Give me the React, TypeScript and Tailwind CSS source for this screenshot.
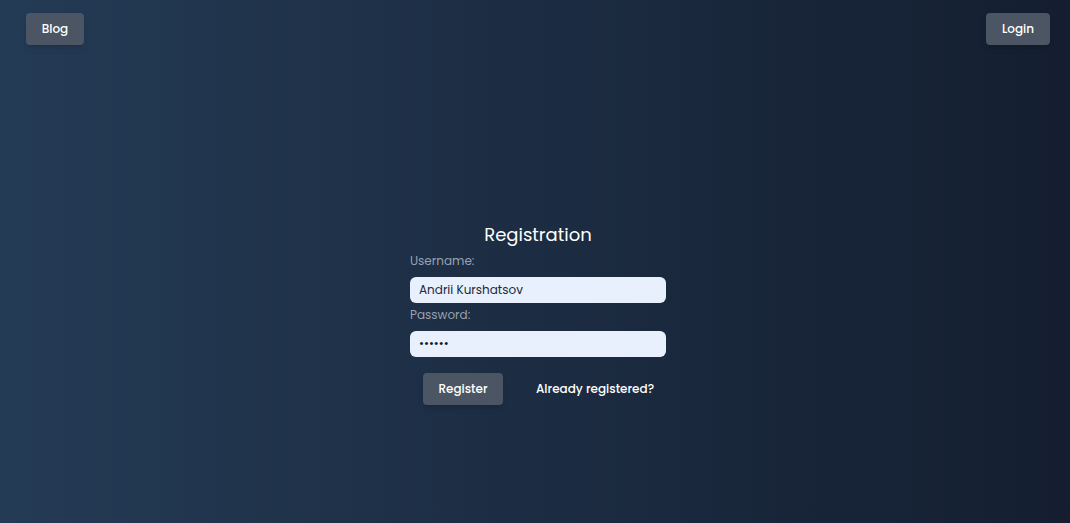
export default function App() {
  return (
    <div className="min-h-screen w-full bg-gradient-to-r from-[#243b55] to-[#141e30] font-['Poppins','Noto_Sans',sans-serif] text-white">
      <header className="flex items-center justify-between pl-[26px] pr-[20px] pt-[13px]">
        <button className="h-8 w-[58px] bg-[#4b5563] rounded-sm shadow-md text-xs font-medium">Blog</button>
        <button className="h-8 w-16 bg-[#4b5563] rounded-sm shadow-md text-xs font-medium">Login</button>
      </header>
      <div className="pl-[6px]">
        <main className="mx-auto mt-[176px] w-64 flex flex-col">
          <h1 className="text-lg font-normal text-center leading-7 mb-[2px]">Registration</h1>
          <label className="text-xs leading-5 text-gray-400">Username:</label>
          <input
            className="mt-1.5 h-[26px] rounded-md bg-[#e8f0fe] px-[9px] text-xs text-gray-800 outline-none"
            defaultValue="Andrii Kurshatsov"
          />
          <label className="mt-0.5 text-xs leading-5 text-gray-400">Password:</label>
          <input
            type="password"
            className="mt-1.5 h-[26px] rounded-md bg-[#e8f0fe] px-[9px] text-xs text-gray-900 outline-none"
            defaultValue="123456"
          />
          <div className="mt-4 flex items-center pl-[13px] gap-[33px]">
            <button className="h-8 w-20 bg-[#4b5563] rounded-sm shadow-md text-xs font-medium">Register</button>
            <a className="text-xs font-medium">Already registered?</a>
          </div>
        </main>
      </div>
    </div>
  );
}
